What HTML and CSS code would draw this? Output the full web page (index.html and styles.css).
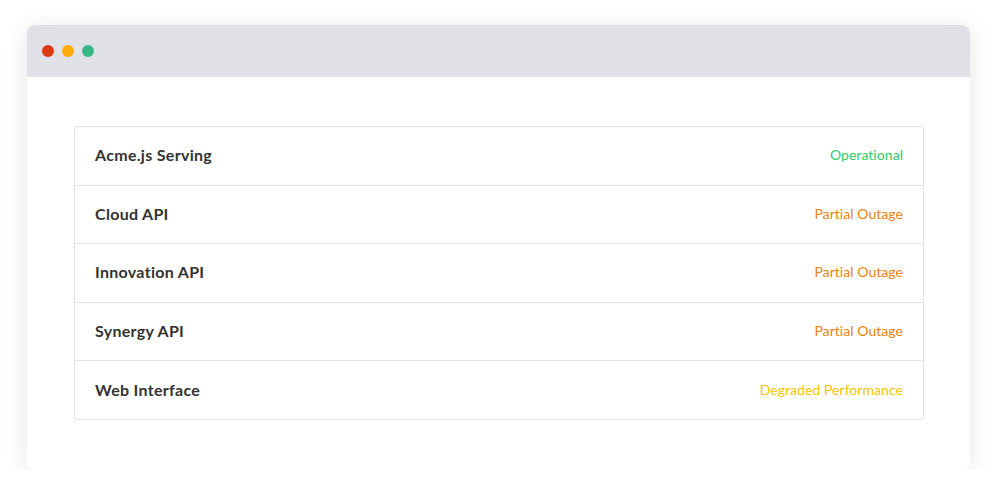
FILE: index.html
```html
<!DOCTYPE html>
<html>
<head>
<meta charset="utf-8">
<link rel="stylesheet" href="styles.css">
</head>
<body>
<div class="window">
  <div class="titlebar">
    <span class="dot red"></span>
    <span class="dot yellow"></span>
    <span class="dot green"></span>
  </div>
  <div class="content">
    <div class="card">
      <div class="row"><span class="name">Acme.js Serving</span><span class="status ok">Operational</span></div>
      <div class="row"><span class="name">Cloud API</span><span class="status partial">Partial Outage</span></div>
      <div class="row"><span class="name">Innovation API</span><span class="status partial">Partial Outage</span></div>
      <div class="row"><span class="name">Synergy API</span><span class="status partial">Partial Outage</span></div>
      <div class="row"><span class="name">Web Interface</span><span class="status degraded">Degraded Performance</span></div>
    </div>
  </div>
</div>
</body>
</html>
```
FILE: styles.css
```css
html, body { margin: 0; padding: 0; background: #ffffff; }
body {
  padding: 25px 27px 0 27px;
  font-family: Lato, "Open Sans", sans-serif;
}
.window {
  width: 943px;
  height: 445px;
  background: #fff;
  border-radius: 8px;
  box-shadow: 0 3px 24px rgba(0,0,0,0.10);
  overflow: hidden;
  display: flex;
  flex-direction: column;
}
.titlebar {
  height: 52px;
  background: #e0e1e6;
  display: flex;
  align-items: center;
  gap: 8px;
  padding-left: 15px;
  flex-shrink: 0;
}
.dot { width: 12px; height: 12px; border-radius: 50%; display: block; }
.red { background: #dc3912; }
.yellow { background: #fdab06; }
.green { background: #37b784; }
.content {
  padding: 49px 46px 0 47px;
}
.card {
  border: 1px solid #e2e2e2;
  border-radius: 3px;
}
.row {
  height: 57.6px;
  display: flex;
  align-items: center;
  justify-content: space-between;
  padding: 0 20px;
  border-top: 1px solid #e2e2e2;
}
.row:first-child { border-top: none; }
.name {
  font-weight: 700;
  font-size: 16px;
  letter-spacing: 0.3px;
  color: #333333;
  margin-top: -2px;
}
.status { font-size: 14px; letter-spacing: 0.05px; margin-top: -2px; }
.ok { color: #2fcc66; }
.partial { color: #e8830f; }
.degraded { color: #f3c500; }
```
